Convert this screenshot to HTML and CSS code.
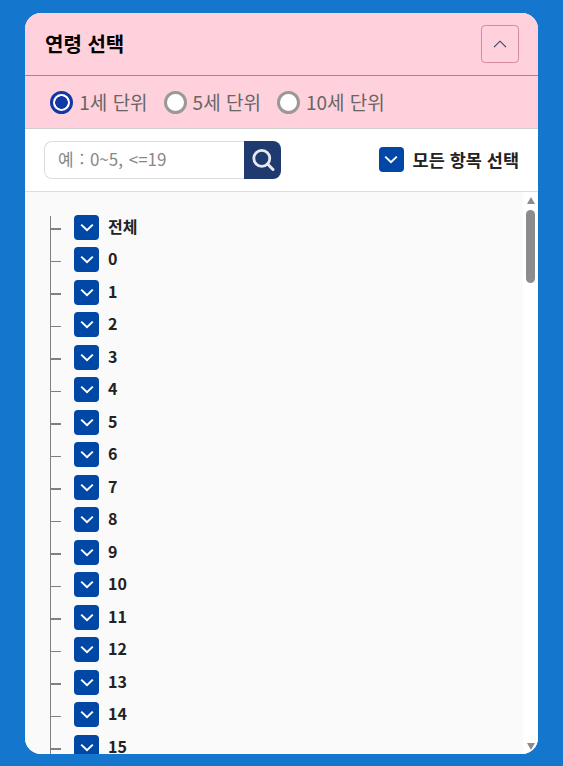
FILE: index.html
```html
<!DOCTYPE html>
<html lang="ko">
<head>
<meta charset="utf-8">
<title>연령 선택</title>
<link rel="stylesheet" href="styles.css">
</head>
<body>
<main class="card">
  <header class="head">
    <h2 class="title">연령 선택</h2>
    <button class="collapse" type="button" aria-label="접기">
      <svg width="14" height="8" viewBox="0 0 14 8"><path d="M1 7.2 7 1.2l6 6" fill="none" stroke="#2f3b66" stroke-width="1.1"/></svg>
    </button>
  </header>
  <div class="units">
    <label class="unit"><span class="radio on"></span>1세 단위</label>
    <label class="unit"><span class="radio"></span>5세 단위</label>
    <label class="unit"><span class="radio"></span>10세 단위</label>
  </div>
  <div class="tools">
    <div class="search">
      <div class="field">예 : 0~5, &lt;=19</div>
      <button class="go" type="button" aria-label="검색">
        <svg width="24" height="24" viewBox="0 0 24 24"><circle cx="10.8" cy="10.3" r="8" fill="none" stroke="#e6e9f0" stroke-width="2.8"/><path d="M16.8 16.3 22 21.5" stroke="#e6e9f0" stroke-width="3" stroke-linecap="round"/></svg>
      </button>
    </div>
    <label class="all">
      <span class="check"><svg width="14" height="9" viewBox="0 0 14 9"><path d="M1.2 1.6 7 7.2l5.8-5.6" fill="none" stroke="#fff" stroke-width="2"/></svg></span>
      모든 항목 선택
    </label>
  </div>
  <div class="body">
    <ul class="tree">
      <li class="row"><span class="check"><svg width="14" height="9" viewBox="0 0 14 9"><path d="M1.2 1.6 7 7.2l5.8-5.6" fill="none" stroke="#fff" stroke-width="2"/></svg></span>전체</li>
      <li class="row"><span class="check"><svg width="14" height="9" viewBox="0 0 14 9"><path d="M1.2 1.6 7 7.2l5.8-5.6" fill="none" stroke="#fff" stroke-width="2"/></svg></span>0</li>
      <li class="row"><span class="check"><svg width="14" height="9" viewBox="0 0 14 9"><path d="M1.2 1.6 7 7.2l5.8-5.6" fill="none" stroke="#fff" stroke-width="2"/></svg></span>1</li>
      <li class="row"><span class="check"><svg width="14" height="9" viewBox="0 0 14 9"><path d="M1.2 1.6 7 7.2l5.8-5.6" fill="none" stroke="#fff" stroke-width="2"/></svg></span>2</li>
      <li class="row"><span class="check"><svg width="14" height="9" viewBox="0 0 14 9"><path d="M1.2 1.6 7 7.2l5.8-5.6" fill="none" stroke="#fff" stroke-width="2"/></svg></span>3</li>
      <li class="row"><span class="check"><svg width="14" height="9" viewBox="0 0 14 9"><path d="M1.2 1.6 7 7.2l5.8-5.6" fill="none" stroke="#fff" stroke-width="2"/></svg></span>4</li>
      <li class="row"><span class="check"><svg width="14" height="9" viewBox="0 0 14 9"><path d="M1.2 1.6 7 7.2l5.8-5.6" fill="none" stroke="#fff" stroke-width="2"/></svg></span>5</li>
      <li class="row"><span class="check"><svg width="14" height="9" viewBox="0 0 14 9"><path d="M1.2 1.6 7 7.2l5.8-5.6" fill="none" stroke="#fff" stroke-width="2"/></svg></span>6</li>
      <li class="row"><span class="check"><svg width="14" height="9" viewBox="0 0 14 9"><path d="M1.2 1.6 7 7.2l5.8-5.6" fill="none" stroke="#fff" stroke-width="2"/></svg></span>7</li>
      <li class="row"><span class="check"><svg width="14" height="9" viewBox="0 0 14 9"><path d="M1.2 1.6 7 7.2l5.8-5.6" fill="none" stroke="#fff" stroke-width="2"/></svg></span>8</li>
      <li class="row"><span class="check"><svg width="14" height="9" viewBox="0 0 14 9"><path d="M1.2 1.6 7 7.2l5.8-5.6" fill="none" stroke="#fff" stroke-width="2"/></svg></span>9</li>
      <li class="row"><span class="check"><svg width="14" height="9" viewBox="0 0 14 9"><path d="M1.2 1.6 7 7.2l5.8-5.6" fill="none" stroke="#fff" stroke-width="2"/></svg></span>10</li>
      <li class="row"><span class="check"><svg width="14" height="9" viewBox="0 0 14 9"><path d="M1.2 1.6 7 7.2l5.8-5.6" fill="none" stroke="#fff" stroke-width="2"/></svg></span>11</li>
      <li class="row"><span class="check"><svg width="14" height="9" viewBox="0 0 14 9"><path d="M1.2 1.6 7 7.2l5.8-5.6" fill="none" stroke="#fff" stroke-width="2"/></svg></span>12</li>
      <li class="row"><span class="check"><svg width="14" height="9" viewBox="0 0 14 9"><path d="M1.2 1.6 7 7.2l5.8-5.6" fill="none" stroke="#fff" stroke-width="2"/></svg></span>13</li>
      <li class="row"><span class="check"><svg width="14" height="9" viewBox="0 0 14 9"><path d="M1.2 1.6 7 7.2l5.8-5.6" fill="none" stroke="#fff" stroke-width="2"/></svg></span>14</li>
      <li class="row"><span class="check"><svg width="14" height="9" viewBox="0 0 14 9"><path d="M1.2 1.6 7 7.2l5.8-5.6" fill="none" stroke="#fff" stroke-width="2"/></svg></span>15</li>
    </ul>
    <div class="bar" aria-hidden="true">
      <span class="arrow up"></span>
      <span class="thumb"></span>
      <span class="arrow down"></span>
    </div>
  </div>
</main>
</body>
</html>
```

FILE: styles.css
```css
* { box-sizing: border-box; }
html, body { height: 100%; }
body {
  margin: 0;
  padding: 13px 25px 12px;
  background: #1477cd;
  font-family: "Noto Sans CJK KR", "Noto Sans", sans-serif;
  overflow: hidden;
}
.card {
  height: 741px;
  display: flex;
  flex-direction: column;
  background: #fff;
  border-radius: 16px;
  overflow: hidden;
}
.head {
  height: 63px;
  flex: none;
  display: flex;
  align-items: center;
  justify-content: space-between;
  padding: 0 19px 1px 20px;
  background: #ffd1dc;
  border-bottom: 1px solid #e8687f;
}
.title {
  margin: 0;
  font-size: 20px;
  font-weight: 700;
  color: #000;
}
.collapse {
  width: 38px;
  height: 38px;
  display: flex;
  align-items: center;
  justify-content: center;
  padding: 0;
  background: transparent;
  border: 1px solid #d58a9f;
  border-radius: 4px;
}
.units {
  height: 53px;
  flex: none;
  display: flex;
  align-items: center;
  gap: 16px;
  padding-left: 25.3px;
  background: #ffd1dc;
  border-bottom: 1px solid #cfcfcf;
}
.unit {
  display: flex;
  align-items: center;
  gap: 6px;
  padding-bottom: 2px;
  font-size: 19px;
  color: #666;
}
.radio {
  width: 23px;
  height: 23px;
  margin-bottom: -2px;
  border: 3px solid #999;
  border-radius: 50%;
  background: #fff;
}
.radio.on {
  border-color: #1238a8;
  background: radial-gradient(circle, #1238a8 0 6px, #fff 6.6px);
}
.tools {
  height: 63px;
  flex: none;
  display: flex;
  align-items: center;
  justify-content: space-between;
  padding: 0 19px;
  border-bottom: 1px solid #dedede;
}
.search { display: flex; }
.field {
  width: 200px;
  height: 38px;
  display: flex;
  align-items: center;
  padding: 0 0 3px 13px;
  border: 1px solid #ddd;
  border-right: 0;
  border-radius: 8px 0 0 8px;
  font-size: 17px;
  word-spacing: 1px;
  color: #888;
  background: #fff;
}
.go {
  width: 37px;
  height: 38px;
  display: flex;
  align-items: center;
  justify-content: center;
  padding: 0;
  background: #1f3a6e;
  border: 0;
  border-radius: 0 8px 8px 0;
}
.check {
  width: 25px;
  height: 25px;
  flex: none;
  display: flex;
  align-items: center;
  justify-content: center;
  background: #0047a6;
  border-radius: 4px;
}
.all {
  display: flex;
  align-items: center;
  gap: 9px;
  padding-bottom: 2px;
  font-size: 17.5px;
  font-weight: 700;
  color: #222;
}
.all .check { margin-top: 1px; }
.body {
  flex: 1;
  min-height: 0;
  display: flex;
}
.tree {
  flex: 1;
  margin: 0;
  padding: 22.9px 0 0 49px;
  list-style: none;
  background: #fafafa;
  overflow: hidden;
  position: relative;
}
.tree::before {
  content: "";
  position: absolute;
  left: 25px;
  top: 24px;
  bottom: 0;
  width: 1px;
  background: #808080;
}
.row {
  height: 32.5px;
  display: flex;
  align-items: flex-start;
  gap: 9px;
  font-size: 16px;
  font-weight: 700;
  line-height: 22px;
  color: #222;
  position: relative;
}
.row::before {
  content: "";
  position: absolute;
  left: -24px;
  top: 13.25px;
  width: 11px;
  height: 1.5px;
  background: #808080;
}
.bar {
  width: 15px;
  flex: none;
  display: flex;
  flex-direction: column;
  align-items: center;
  background: #fff;
  padding: 5px 0 4px;
}
.arrow {
  width: 0;
  height: 0;
  border-left: 4.5px solid transparent;
  border-right: 4.5px solid transparent;
}
.up { border-bottom: 7px solid #8c8c8c; }
.down { border-top: 7px solid #8c8c8c; margin-top: auto; }
.thumb {
  width: 9px;
  height: 73px;
  margin-top: 6px;
  background: #8c8c8c;
  border-radius: 5px;
}
```
